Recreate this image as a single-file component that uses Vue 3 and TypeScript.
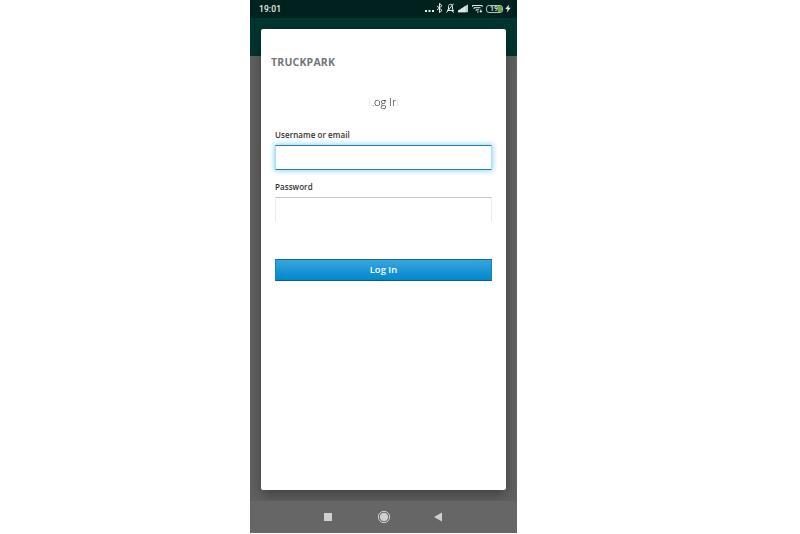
<script setup lang="ts">
import { ref } from 'vue'

const username = ref('')
const password = ref('')
const time = '19:01'
const battery = 19
</script>

<template>
  <main class="phone">
    <header class="status">
      <span class="time">{{ time }}</span>
      <div class="indicators">
        <svg class="dots" width="10" height="12" viewBox="0 0 10 12"><path d="M0 8h2v2H0zM3.500 8h2v2h-2zM7 8h2v2H7z" /></svg>
        <svg class="line bluetooth" width="7" height="12" viewBox="0 0 7 12"><path d="M1 4l5 4.400-2.500 2.200V1.400L6 3.700 1 8" /></svg>
        <svg class="line bell" width="9" height="12" viewBox="0 0 9 12"><path d="M1.500 8.500h6L6.500 7V4.500C6.500 1.500 2.500 1.500 2.500 4.500V7L1.500 8.500M7.500 1.700L.5 10.500M6 9l2 1.500" /></svg>
        <svg class="signal" width="11" height="12" viewBox="0 0 11 12"><path opacity=".85" d="M0 10.300V8.700L10 2.300v8z" /><path d="M0 10.300V8.700L2.300 7.300v3zM2.800 10.300V7L4.800 5.700v4.600zM5.300 10.300V5.400l2-1.300v6.200z" /></svg>
        <svg class="line wifi" width="11" height="12" viewBox="0 0 11 12"><path d="M.3 5V3.500h9.900V5M2 7V5.700h6.500M4 8.700V7.800h3M5 10h1.500M8.800 7.500v3M7.700 9.500h2.400" /></svg>
        <div class="battery"><span>{{ battery }}</span><i></i></div>
        <svg class="bolt" width="6" height="12" viewBox="0 0 6 12"><path d="M4 2.500L.3 7h2.300L1.700 10.500 5.800 5.800H3.500z" /></svg>
      </div>
    </header>
    <div class="toolbar"></div>
    <div class="backdrop"></div>
    <section class="dialog">
      <h1>TRUCKPARK</h1>
      <form @submit.prevent>
        <h2>Log In</h2>
        <label for="username">Username or email</label>
        <input id="username" v-model="username" class="focused" type="text" />
        <label for="password">Password</label>
        <input id="password" v-model="password" class="secret" type="password" />
        <button type="submit">Log In</button>
      </form>
    </section>
    <nav class="navigation">
      <svg width="10" height="12" viewBox="0 0 10 12"><path d="M1 2h8v8H1z" /></svg>
      <svg width="14" height="14" viewBox="0 0 14 14"><circle cx="7" cy="7" r="5.700" fill="none" stroke="#cfcfcf" /><circle cx="7" cy="7" r="4.200" /></svg>
      <svg width="10" height="12" viewBox="0 0 10 12"><path d="M1 6l8-4.500v9z" /></svg>
    </nav>
  </main>
</template>

<style>
body { background: #fff; overflow: hidden; }
</style>

<style scoped>
.phone {
  position: relative;
  box-sizing: border-box;
  display: flex;
  flex-direction: column;
  width: 267px;
  height: 533px;
  margin-left: 250px;
  overflow: hidden;
  background: #666;
  font-family: "Open Sans", sans-serif;
}
.status {
  display: flex;
  justify-content: space-between;
  height: 18px;
  padding: 0 6px 0 9px;
  box-sizing: border-box;
  background: #00221e;
  color: #e9f0ef;
}
.time { font: 500 8.500px/18px Roboto, sans-serif; letter-spacing: .1px; }
.indicators { display: flex; align-items: flex-start; padding-top: 2px; fill: #e6eeec; }
.indicators svg { flex: none; }
.indicators .line { fill: none; stroke: #e6eeec; stroke-width: 1; }
.indicators .wifi { stroke-linejoin: round; }
.bluetooth { margin-left: 1px; }
.bell { margin-left: 3px; }
.signal { margin-left: 3px; }
.wifi { margin-left: 3px; }
.battery {
  box-sizing: border-box;
  display: flex;
  align-items: center;
  justify-content: flex-end;
  width: 17px;
  height: 8px;
  margin: 3px 2px 0 3px;
  border: 1px solid #b5c0bd;
  border-radius: 3px;
  overflow: hidden;
  font: 500 7px/7px Roboto, sans-serif;
}
.battery i { width: 4px; height: 8px; background: #67a849; }
.toolbar { height: 38px; background: #003530; }
.backdrop { flex: 1; background: #616161; }
.dialog {
  position: absolute;
  top: 29px;
  left: 11px;
  box-sizing: border-box;
  width: 245px;
  height: 461px;
  padding: 25px 14px 0;
  border-radius: 2px;
  background: #fff;
  box-shadow: 0 5px 14px rgba(0, 0, 0, .34);
}
h1 {
  margin: 0 0 0 -4px;
  color: #72767a;
  font-size: 10.500px;
  line-height: 17px;
  font-weight: 700;
  letter-spacing: .2px;
}
form { display: flex; flex-direction: column; }
h2 {
  align-self: center;
  margin: 22px 0 0;
  color: #111;
  font-size: 11.300px;
  line-height: 18px;
  font-weight: 300;
  -webkit-mask-image: linear-gradient(90deg, rgba(0, 0, 0, .15) 5px, #000 5px, #000 27px, rgba(0, 0, 0, .15) 28px);
  mask-image: linear-gradient(90deg, rgba(0, 0, 0, .15) 5px, #000 5px, #000 27px, rgba(0, 0, 0, .15) 28px);
}
label { color: #333; font-size: 8px; line-height: 12px; font-weight: 600; letter-spacing: .06px; }
label[for="username"] { margin-top: 18px; }
label[for="password"] { margin-top: 11px; }
input {
  box-sizing: border-box;
  width: 217px;
  height: 25px;
  margin: 4px 0 0;
  padding: 2px 5px;
  border: 1px solid #ededed;
  border-top-color: #c5c5c5;
  border-bottom-color: #fff;
  border-radius: 0;
  background: #fff;
  color: #333;
  font: 8px "Open Sans", sans-serif;
  outline: none;
}
.focused {
  border-color: #2582b0 #a0e2f7;
  box-shadow: 0 0 5px 1px #94d7f6;
}
button {
  box-sizing: border-box;
  width: 217px;
  height: 22px;
  margin: 37px 0 0;
  padding: 0;
  border: 1px solid #1783b9;
  border-top-color: #17688f;
  border-bottom-color: #075d89;
  border-radius: 0;
  background: linear-gradient(#39a5dc, #0088ce);
  color: #fff;
  font: 600 9.500px/20px "Open Sans", sans-serif;
}
.navigation {
  z-index: 1;
  display: flex;
  align-items: center;
  height: 32px;
  flex: none;
  padding-left: 73px;
  background: #666;
  fill: #d0d0d0;
}
.navigation svg:nth-child(2) { margin-left: 44px; }
.navigation svg:nth-child(3) { margin-left: 42px; }
</style>
